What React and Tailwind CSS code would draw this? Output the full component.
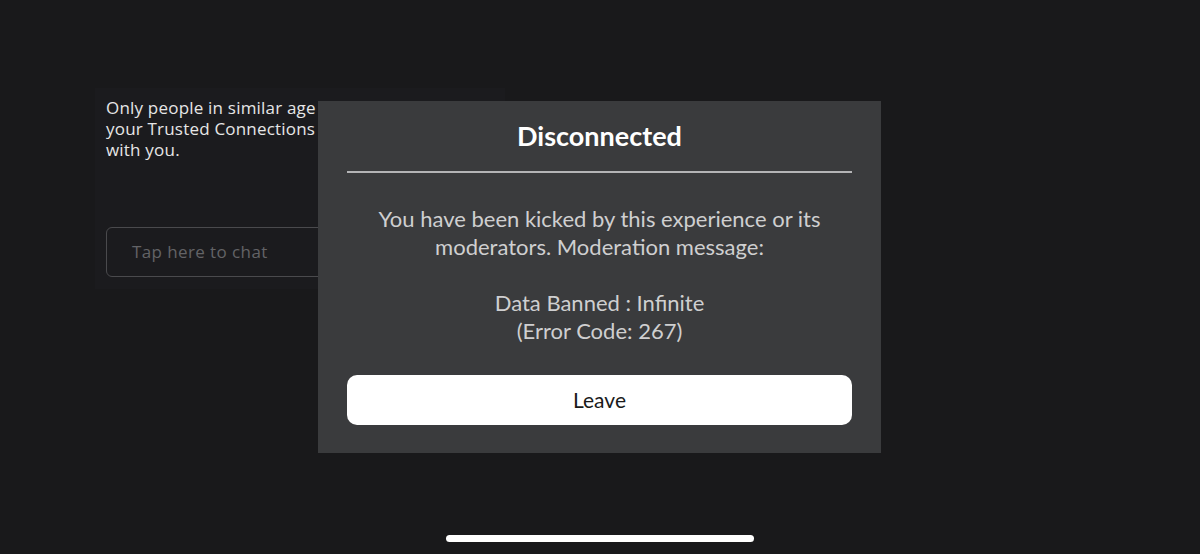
export default function App() {
  return (
    <div className="relative h-[554px] w-[1200px] overflow-hidden bg-[#19191b]" style={{ fontFamily: 'Lato, "Noto Sans", sans-serif' }}>
      {/* chat panel */}
      <div className="ml-[95px] mt-[88px] w-[410px] bg-[#1b1b1e] pb-[12px] pl-[11px] pt-[9px]">
        <p className="text-[17px] leading-[21px] tracking-[0.2px] text-[#e6e6e6]" style={{ fontFamily: '"Open Sans", Lato, sans-serif' }}>
          Only people in similar age groups and
          <br />
          your Trusted Connections can chat
          <br />
          with you.
        </p>
        <div className="mt-[67px] flex h-[50px] w-[380px] items-center rounded-[6px] border border-[#4a4a4d] pl-[25px]">
          <span className="text-[17px] tracking-[0.4px] text-[#636366]" style={{ fontFamily: '"Open Sans", Lato, sans-serif' }}>Tap here to chat</span>
        </div>
      </div>

      {/* modal */}
      <div className="absolute left-[318px] top-[101px] flex h-[352px] w-[563px] flex-col bg-[#3a3b3d] px-[29px] pb-[28px] pt-[19px]">
        <h1 className="text-center text-[27px] font-bold leading-[32px] text-white">Disconnected</h1>
        <div className="mt-[19px] h-[2px] bg-[#b4b4b6]" />
        <div className="mt-[32px] text-center text-[22px] leading-[28px] text-[#cfcfd0]">
          <p>You have been kicked by this experience or its</p>
          <p>moderators. Moderation message:</p>
          <p className="mt-[28px]">Data Banned : Infinite</p>
          <p>(Error Code: 267)</p>
        </div>
        <button className="mt-auto flex h-[50px] items-center justify-center rounded-[10px] bg-white text-[21px] text-[#1a1a1a]">
          Leave
        </button>
      </div>

      {/* home indicator */}
      <div className="absolute bottom-[12px] left-[446px] h-[7px] w-[308px] rounded-full bg-white" />
    </div>
  );
}
